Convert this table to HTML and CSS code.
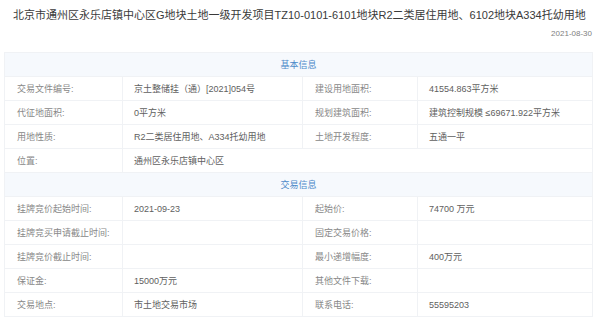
FILE: index.html
```html
<!DOCTYPE html>
<html lang="zh">
<head>
<meta charset="utf-8">
<link rel="stylesheet" href="styles.css">
</head>
<body>
<div class="page">
  <h1 class="title">北京市通州区永乐店镇中心区G地块土地一级开发项目TZ10-0101-6101地块R2二类居住用地、6102地块A334托幼用地</h1>
  <div class="date">2021-08-30</div>
  <table class="info">
    <colgroup>
      <col class="c1"><col class="c2"><col class="c3"><col class="c4">
    </colgroup>
    <tr class="head"><td colspan="4">基本信息</td></tr>
    <tr><td class="lbl">交易文件编号:</td><td class="val">京土整储挂（通）[2021]054号</td><td class="lbl">建设用地面积:</td><td class="val">41554.863平方米</td></tr>
    <tr><td class="lbl">代征地面积:</td><td class="val">0平方米</td><td class="lbl">规划建筑面积:</td><td class="val">建筑控制规模 ≤69671.922平方米</td></tr>
    <tr><td class="lbl">用地性质:</td><td class="val">R2二类居住用地、A334托幼用地</td><td class="lbl">土地开发程度:</td><td class="val">五通一平</td></tr>
    <tr><td class="lbl">位置:</td><td class="val" colspan="3">通州区永乐店镇中心区</td></tr>
    <tr class="head"><td colspan="4">交易信息</td></tr>
    <tr><td class="lbl">挂牌竞价起始时间:</td><td class="val">2021-09-23</td><td class="lbl">起始价:</td><td class="val">74700 万元</td></tr>
    <tr><td class="lbl">挂牌竞买申请截止时间:</td><td class="val"></td><td class="lbl">固定交易价格:</td><td class="val"></td></tr>
    <tr><td class="lbl">挂牌竞价截止时间:</td><td class="val"></td><td class="lbl">最小递增幅度:</td><td class="val">400万元</td></tr>
    <tr><td class="lbl">保证金:</td><td class="val">15000万元</td><td class="lbl">其他文件下载:</td><td class="val"></td></tr>
    <tr><td class="lbl">交易地点:</td><td class="val">市土地交易市场</td><td class="lbl">联系电话:</td><td class="val">55595203</td></tr>
  </table>
</div>
</body>
</html>
```

FILE: styles.css
```css
html, body {
  margin: 0;
  padding: 0;
  background: #ffffff;
}
body {
  font-family: "Liberation Sans", "Noto Sans CJK SC", sans-serif;
  color: #333333;
}
.page {
  padding: 8px 8px 0 4px;
}
.title {
  margin: 0 0 0 9px;
  font-size: 11px;
  font-weight: normal;
  line-height: 14px;
  color: #3a3a3a;
  white-space: nowrap;
}
.date {
  margin-top: 6px;
  text-align: right;
  font-size: 8px;
  line-height: 12px;
  color: #808080;
}
.info {
  margin-top: 12px;
  width: 588px;
  border-collapse: collapse;
  table-layout: fixed;
  font-size: 9px;
}
.c1 { width: 118px; }
.c2 { width: 180px; }
.c3 { width: 115px; }
.c4 { width: 175px; }
.info td {
  border: 1px solid #f0f2f5;
  height: 24px;
  padding: 0 0 0 11px;
  box-sizing: border-box;
  white-space: nowrap;
}
.info td.lbl {
  color: #888888;
  padding-left: 12px;
}
.info td.val {
  color: #606060;
}
.info tr.head td {
  background: #f6f9fd;
  color: #4d8ac9;
  text-align: center;
  padding: 0;
}
```
